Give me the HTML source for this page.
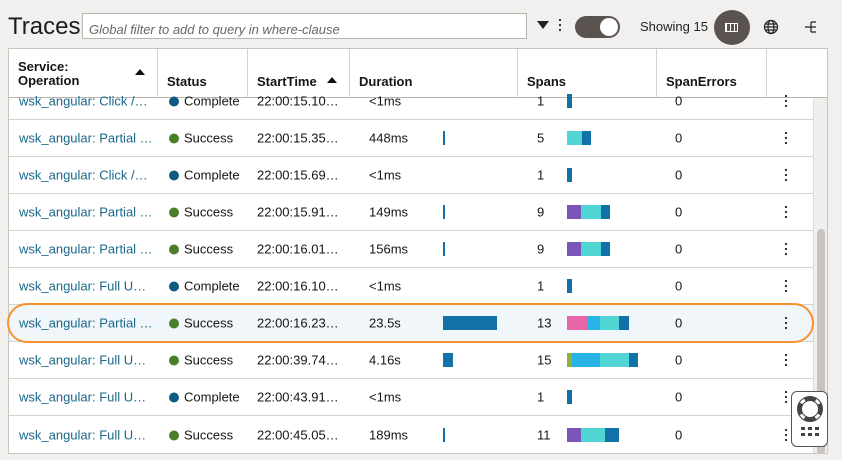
<!DOCTYPE html>
<html><head><meta charset="utf-8"><style>
*{box-sizing:border-box;margin:0;padding:0}
body{width:842px;height:460px;background:#f2f0ee;font-family:"Liberation Sans",Arial,sans-serif;position:relative;overflow:hidden;color:#161513}
.a{position:absolute}
.title{left:8px;top:13px;font-size:24px;color:#1e1c1a}
.filter{left:82px;top:13px;width:445px;height:26px;border:1px solid #b9b4ae;background:#fff;font-style:italic;font-size:13px;color:#6a6763;padding:8px 6px 0}
.tbl{left:8px;top:48px;width:820px;height:406px;background:#fff;border:1px solid #c9c4be;overflow:hidden}
.hd{position:absolute;top:0;height:49px;border-right:1px solid #d6d2cc;border-bottom:1px solid #b9b4ae;font-weight:bold;font-size:13px;padding:0 9px}
.row{position:absolute;left:0;width:804px;height:37px;border-bottom:1px solid #d6d2cc;font-size:13px}
.row span{position:absolute;top:50%;transform:translateY(-50%);white-space:nowrap}
.lnk{color:#1a6789;left:10px}
.dot{display:inline-block;width:10px;height:10px;border-radius:50%;margin-right:5px;vertical-align:-1px}
.g{background:#4a7f2a}.b{background:#0f5a7f}
.bar{position:absolute;top:50%;height:14px;margin-top:-7px}
.kb{position:absolute;left:776px;top:50%;margin-top:-6px;width:3px}
.kb i{display:block;width:2px;height:2px;background:#333;margin-bottom:3px}
</style></head><body>
<div class="a title">Traces</div>
<div class="a filter">Global filter to add to query in where-clause</div>
<div class="a" style="left:537px;top:21px;width:0;height:0;border-left:6px solid transparent;border-right:6px solid transparent;border-top:8px solid #222"></div>
<div class="a" style="left:559px;top:19px;width:2px;height:2px;background:#333;box-shadow:0 5px #333,0 10px #333"></div>
<div class="a" style="left:575px;top:16px;width:45px;height:22px;border-radius:11px;background:#5b5350"></div>
<div class="a" style="left:600px;top:18px;width:18px;height:18px;border-radius:50%;background:#fff"></div>
<div class="a" style="left:640px;top:19px;font-size:13px;color:#222">Showing 15</div>
<div class="a" style="left:714px;top:10px;width:36px;height:35px;border-radius:50%;background:#5b5350"></div>
<div class="a" style="left:725px;top:23px;width:13px;height:9px;border:1px solid #fff;background:repeating-linear-gradient(90deg,#fff 0 1px,transparent 1px 4px)"></div>
<svg class="a" style="left:763px;top:19px" width="16" height="16" viewBox="0 0 16 16" fill="none" stroke="#222" stroke-width="1.2"><circle cx="8" cy="8" r="6.5"/><ellipse cx="8" cy="8" rx="3" ry="6.5"/><path d="M1.5 8h13M2.5 5h11M2.5 11h11"/></svg>
<svg class="a" style="left:804px;top:19px" width="16" height="16" viewBox="0 0 16 16" fill="none" stroke="#222" stroke-width="1.2"><path d="M1 8h6M7 3v10M7 3h5M7 8h5M7 13h5"/></svg>
<div class="a tbl">
 <div class="hd" style="left:0;width:149px;padding-top:11px;line-height:14px">Service:<br>Operation<span style="position:absolute;left:126px;top:20px;border-left:5px solid transparent;border-right:5px solid transparent;border-bottom:6px solid #111"></span></div>
 <div class="hd" style="left:149px;width:90px;padding-top:25px">Status</div>
 <div class="hd" style="left:239px;width:102px;padding-top:25px">StartTime<span style="position:absolute;left:79px;top:28px;border-left:5px solid transparent;border-right:5px solid transparent;border-bottom:6px solid #111"></span></div>
 <div class="hd" style="left:341px;width:168px;padding-top:25px">Duration</div>
 <div class="hd" style="left:509px;width:139px;padding-top:25px">Spans</div>
 <div class="hd" style="left:648px;width:110px;padding-top:25px">SpanErrors</div>
 <div class="hd" style="left:758px;width:62px;border-right:none"></div>

 <div class="row" style="top:34px;height:37px"><span class="lnk" style="top:18px">wsk_angular: Click /…</span><span style="left:160px;top:18px"><i class="dot b"></i>Complete</span><span style="left:248px;top:18px">22:00:15.10…</span><span style="left:360px;top:18px">&lt;1ms</span><span style="left:528px;top:18px">1</span><div class="bar" style="left:558px;width:5px;background:#1272a8;top:18px"></div><span style="left:666px;top:18px">0</span><div class="kb" style="top:18px"><i></i><i></i><i></i></div></div>

 <div class="row" style="top:71px"><span class="lnk">wsk_angular: Partial …</span><span style="left:160px"><i class="dot g"></i>Success</span><span style="left:248px">22:00:15.35…</span><span style="left:360px">448ms</span><div class="bar" style="left:434px;width:2px;background:#1272a8"></div><span style="left:528px">5</span><div class="bar" style="left:558px;width:15px;background:#50d4d4"></div><div class="bar" style="left:573px;width:9px;background:#1272a8"></div><span style="left:666px">0</span><div class="kb"><i></i><i></i><i></i></div></div>

 <div class="row" style="top:108px"><span class="lnk">wsk_angular: Click /…</span><span style="left:160px"><i class="dot b"></i>Complete</span><span style="left:248px">22:00:15.69…</span><span style="left:360px">&lt;1ms</span><span style="left:528px">1</span><div class="bar" style="left:558px;width:5px;background:#1272a8"></div><span style="left:666px">0</span><div class="kb"><i></i><i></i><i></i></div></div>

 <div class="row" style="top:145px"><span class="lnk">wsk_angular: Partial …</span><span style="left:160px"><i class="dot g"></i>Success</span><span style="left:248px">22:00:15.91…</span><span style="left:360px">149ms</span><div class="bar" style="left:434px;width:2px;background:#1272a8"></div><span style="left:528px">9</span><div class="bar" style="left:558px;width:14px;background:#7a55b8"></div><div class="bar" style="left:572px;width:20px;background:#50d4d4"></div><div class="bar" style="left:592px;width:9px;background:#1272a8"></div><span style="left:666px">0</span><div class="kb"><i></i><i></i><i></i></div></div>

 <div class="row" style="top:182px"><span class="lnk">wsk_angular: Partial …</span><span style="left:160px"><i class="dot g"></i>Success</span><span style="left:248px">22:00:16.01…</span><span style="left:360px">156ms</span><div class="bar" style="left:434px;width:2px;background:#1272a8"></div><span style="left:528px">9</span><div class="bar" style="left:558px;width:14px;background:#7a55b8"></div><div class="bar" style="left:572px;width:20px;background:#50d4d4"></div><div class="bar" style="left:592px;width:9px;background:#1272a8"></div><span style="left:666px">0</span><div class="kb"><i></i><i></i><i></i></div></div>

 <div class="row" style="top:219px"><span class="lnk">wsk_angular: Full U…</span><span style="left:160px"><i class="dot b"></i>Complete</span><span style="left:248px">22:00:16.10…</span><span style="left:360px">&lt;1ms</span><span style="left:528px">1</span><div class="bar" style="left:558px;width:5px;background:#1272a8"></div><span style="left:666px">0</span><div class="kb"><i></i><i></i><i></i></div></div>

 <div class="row" style="top:256px;background:#f0f6fa"><span class="lnk">wsk_angular: Partial …</span><span style="left:160px"><i class="dot g"></i>Success</span><span style="left:248px">22:00:16.23…</span><span style="left:360px">23.5s</span><div class="bar" style="left:434px;width:54px;background:#1272a8"></div><span style="left:528px">13</span><div class="bar" style="left:558px;width:20px;background:#e766a8"></div><div class="bar" style="left:578px;width:13px;background:#28b4e6"></div><div class="bar" style="left:591px;width:19px;background:#50d4d4"></div><div class="bar" style="left:610px;width:10px;background:#1272a8"></div><span style="left:666px">0</span><div class="kb"><i></i><i></i><i></i></div></div>

 <div class="row" style="top:293px"><span class="lnk">wsk_angular: Full U…</span><span style="left:160px"><i class="dot g"></i>Success</span><span style="left:248px">22:00:39.74…</span><span style="left:360px">4.16s</span><div class="bar" style="left:434px;width:10px;background:#1272a8"></div><span style="left:528px">15</span><div class="bar" style="left:558px;width:5px;background:#8db43a"></div><div class="bar" style="left:563px;width:28px;background:#28b4e6"></div><div class="bar" style="left:591px;width:29px;background:#50d4d4"></div><div class="bar" style="left:620px;width:9px;background:#1272a8"></div><span style="left:666px">0</span><div class="kb"><i></i><i></i><i></i></div></div>

 <div class="row" style="top:330px"><span class="lnk">wsk_angular: Full U…</span><span style="left:160px"><i class="dot b"></i>Complete</span><span style="left:248px">22:00:43.91…</span><span style="left:360px">&lt;1ms</span><span style="left:528px">1</span><div class="bar" style="left:558px;width:5px;background:#1272a8"></div><span style="left:666px">0</span><div class="kb"><i></i><i></i><i></i></div></div>

 <div class="row" style="top:367px;border-bottom:none"><span class="lnk">wsk_angular: Full U…</span><span style="left:160px"><i class="dot g"></i>Success</span><span style="left:248px">22:00:45.05…</span><span style="left:360px">189ms</span><div class="bar" style="left:434px;width:2px;background:#1272a8"></div><span style="left:528px">11</span><div class="bar" style="left:558px;width:14px;background:#7a55b8"></div><div class="bar" style="left:572px;width:24px;background:#50d4d4"></div><div class="bar" style="left:596px;width:14px;background:#1272a8"></div><span style="left:666px">0</span><div class="kb"><i></i><i></i><i></i></div></div>

 <div style="position:absolute;left:804px;top:49px;width:16px;height:357px;background:#f0efed;border-left:1px solid #e0ddd9"></div>
 <div style="position:absolute;left:808px;top:180px;width:8px;height:226px;background:#c6c3c0;border-radius:4px"></div>
</div>
<div class="a" style="left:7px;top:303px;width:807px;height:40px;border:2px solid #f7912e;border-radius:20px"></div>
<div class="a" style="left:791px;top:391px;width:37px;height:56px;background:#fff;border:1px solid #555;border-radius:6px"></div>
<svg class="a" style="left:796px;top:395px" width="28" height="28" viewBox="0 0 28 28"><circle cx="14" cy="14" r="10.5" fill="none" stroke="#444" stroke-width="5"/><circle cx="14" cy="14" r="10.5" fill="none" stroke="#fff" stroke-width="3" stroke-dasharray="5 11.5" stroke-dashoffset="-5.7"/></svg>
<div class="a" style="left:801px;top:427px;width:4px;height:3px;background:#444;box-shadow:7px 0 #444,14px 0 #444,0 6px #444,7px 6px #444,14px 6px #444"></div>
</body></html>
